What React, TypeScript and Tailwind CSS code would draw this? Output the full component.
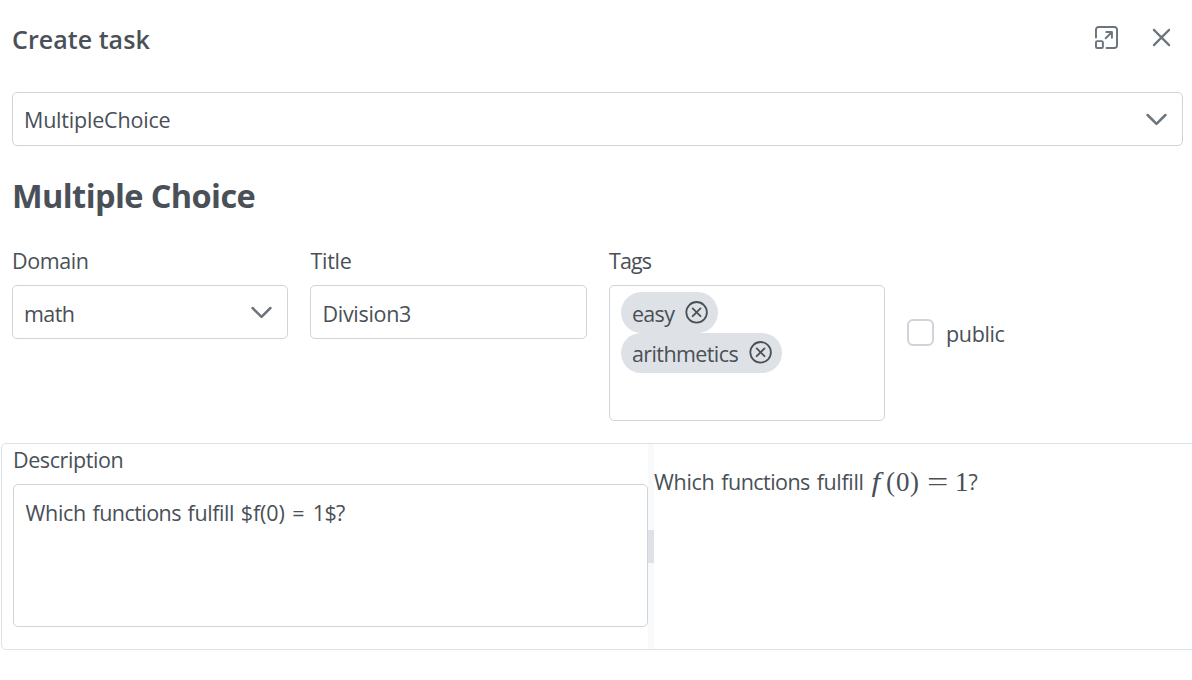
import type { ReactNode } from "react";

function Chevron() {
  return (
    <svg className="h-[14px] w-[22px] shrink-0" viewBox="0 0 22 14" fill="none" stroke="#6c757d" strokeWidth="2.5" strokeLinecap="round" strokeLinejoin="round">
      <path d="M2.6 3 11.5 11.9 20.4 3" />
    </svg>
  );
}

function MaximizeIcon() {
  return (
    <svg className="h-[23px] w-[23px]" viewBox="0 0 14 14" fill="none" stroke="#6c757d" strokeWidth="1.2" strokeLinecap="round" strokeLinejoin="round">
      <path d="M.6 7V2.2A1.6 1.6 0 0 1 2.2.6H11.8A1.6 1.6 0 0 1 13.4 2.2V11.8A1.6 1.6 0 0 1 11.8 13.4H7" />
      <rect x=".6" y="9.2" width="4.2" height="4.2" rx=".8" />
      <path d="M6.9 3.7H10.3V7.1M10.1 3.9 6.5 7.5" />
    </svg>
  );
}

function CloseIcon() {
  return (
    <svg className="h-[19px] w-[19px]" viewBox="0 0 19 19" fill="none" stroke="#6c757d" strokeWidth="2.2" strokeLinecap="round">
      <path d="M1.9 1.9 17.1 17.1M17.1 1.9 1.9 17.1" />
    </svg>
  );
}

function RemoveIcon() {
  return (
    <svg className="h-[24px] w-[23px] shrink-0" viewBox="0 0 23 24" fill="none" stroke="#495057" strokeWidth="1.8" strokeLinecap="round">
      <circle cx="11.6" cy="12.3" r="10.3" />
      <path d="M7.7 8.4 15.5 16.2M15.5 8.4 7.7 16.2" />
    </svg>
  );
}

function Chip({ children, className }: { children: ReactNode; className: string }) {
  return (
    <div className={`flex justify-between rounded-[20.5px] bg-[#dee2e6] pr-[10px] pl-[11px] ${className}`}>
      {children}
      <RemoveIcon />
    </div>
  );
}

const box = "rounded-[5px] border border-[#ced4da] bg-white";

export default function App() {
  return (
    <div className="h-[680px] w-[1192px] overflow-hidden bg-white font-['Open_Sans','Noto_Sans',sans-serif] text-[21.5px] leading-[30px] text-[#495057]">
      <header className="flex h-[92px] justify-between pr-[21px] pl-3">
        <h1 className="pt-[24px] text-[25px] leading-[30px] font-semibold tracking-[0.05px]">Create task</h1>
        <div className="flex gap-[34px]">
          <button className="flex pt-[26px]" aria-label="Maximize"><MaximizeIcon /></button>
          <button className="flex pt-[28px]" aria-label="Close"><CloseIcon /></button>
        </div>
      </header>

      <div className={`${box} mr-[9px] ml-3 flex h-[54px] justify-between pt-[12px] pr-[15px] pl-[11px]`}>
        <span className="tracking-[-0.2px]">MultipleChoice</span>
        <span className="pt-[7px]"><Chevron /></span>
      </div>

      <h2 className="mt-[28px] ml-3 h-[72px] text-[32.5px] leading-[44px] font-bold tracking-[-0.6px]">Multiple Choice</h2>

      <div className="ml-3 flex h-[197px] gap-[22px]">
        <div className="w-[276px]">
          <label className="block h-[39px] tracking-[-0.4px]">Domain</label>
          <div className={`${box} flex h-[54px] justify-between pt-[13px] pr-[15px] pl-[11px]`}>
            <span className="tracking-[-0.6px]">math</span>
            <span className="pt-[6px]"><Chevron /></span>
          </div>
        </div>
        <div className="w-[277px]">
          <label className="block h-[39px] pl-[0.5px] tracking-[-0.3px]">Title</label>
          <div className={`${box} h-[54px] pt-[13px] pl-[11.5px] tracking-[-0.3px]`}>Division3</div>
        </div>
        <div className="w-[276px]">
          <label className="block h-[39px] tracking-[-0.9px]">Tags</label>
          <div className={`${box} h-[136px] pt-[6px] pl-[11px]`}>
            <Chip className="h-[41px] w-[97px] pt-[8px]"><span className="-mt-px tracking-[-0.7px]">easy</span></Chip>
            <Chip className="h-[40px] w-[161px] pt-[7px]"><span className="-mt-px tracking-[-0.6px]">arithmetics</span></Chip>
          </div>
        </div>
        <div className="flex gap-3 pt-[73px]">
          <span className="h-[27px] w-[27px] rounded-[6px] border-2 border-[#ced4da] bg-white" />
          <span className="tracking-[-0.35px]">public</span>
        </div>
      </div>

      <section className="-mr-2 ml-px flex h-[207px] rounded-[5px] border border-[#dee2e6]">
        <div className="w-[646px] pl-[11px]">
          <label className="block h-[40px] pt-[1px] tracking-[-0.4px]">Description</label>
          <div className={`${box} h-[143px] w-[635px] pt-[13px] pl-[11.5px] whitespace-nowrap [word-spacing:1px]`}>
            <span className="tracking-[-0.3px]">Which</span> <span className="tracking-[-0.55px]">functions</span>{" "}
            <span className="tracking-[-0.4px]">fulfill</span> <span className="tracking-[-0.1px]">$f(0)</span>{" "}
            <span className="ml-px">=</span> <span className="ml-[1.5px] tracking-[-0.6px]">1$?</span>
          </div>
        </div>
        <div className="flex w-[6px] shrink-0 flex-col justify-center bg-[#f8f9fa]">
          <span className="h-[33px] bg-[#dee2e6]" />
        </div>
        <div className="flex pt-[23px] whitespace-nowrap">
          <span className="w-[216px] [word-spacing:1.3px]">
            <span className="tracking-[-0.3px]">Which</span> <span className="tracking-[-0.55px]">functions</span>{" "}
            <span className="tracking-[-0.35px]">fulfill</span>
          </span>
          <span className="flex font-['Liberation_Serif',serif] text-[27px] leading-[30px]">
            <span className="w-[16px] pl-[2px]"><span className="inline-block scale-x-[1.15] italic">f</span></span>
            <span className="w-[10px]">(</span>
            <span className="w-[14px]">0</span>
            <span className="w-[18px]">)</span>
            <span className="flex w-[28px] justify-center pr-[8px]"><span className="inline-block scale-x-[1.4]">=</span></span>
            <span className="-ml-px w-[13.5px]">1</span>
          </span>
          <span className="tracking-[-0.5px]">?</span>
        </div>
      </section>
    </div>
  );
}
